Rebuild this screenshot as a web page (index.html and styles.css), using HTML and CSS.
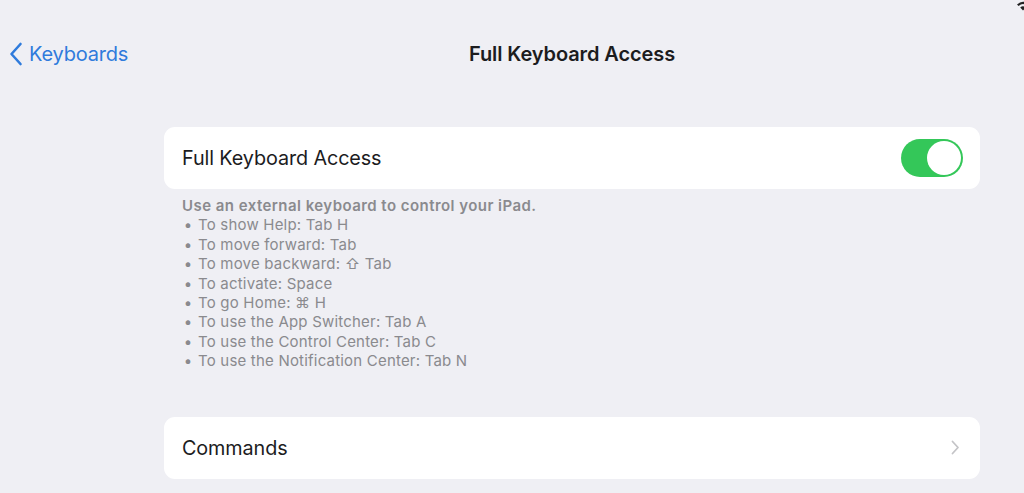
FILE: index.html
```html
<!doctype html>
<html lang="en">
    <head>
        <meta charset="UTF-8" />
        <meta name="viewport" content="width=device-width, initial-scale=1.0" />
        <title>Full Keyboard Access</title>
        <link rel="stylesheet" href="styles.css">
    </head>
    <body>
        <svg class="status-wifi" width="14" height="12" viewBox="0 0 14 12">
            <path d="M1 4.5 Q7 -1 13 4.5 L11.4 6.1 Q7 2 2.6 6.1 Z M4.2 7.6 Q7 5 9.8 7.6 L7 10.5 Z" fill="#222" />
        </svg>

        <header class="nav-bar">
            <a class="back-link" href="#">
                <svg width="14" height="24" viewBox="0 0 14 24">
                    <path d="M11.5 2 L2.5 12 L11.5 22" fill="none" stroke="currentColor" stroke-width="2.6" stroke-linecap="round" stroke-linejoin="round" />
                </svg>
                <span>Keyboards</span>
            </a>
            <h1 class="nav-title">Full Keyboard Access</h1>
        </header>

        <main class="content">
            <div class="group">
                <div class="row">
                    <span class="row-label">Full Keyboard Access</span>
                    <span class="switch is-on"><span class="switch-knob"></span></span>
                </div>
            </div>

            <div class="footer-note">
                <p class="footer-lead">Use an external keyboard to control your iPad.</p>
                <ul class="shortcut-list">
                    <li>To show Help: Tab H</li>
                    <li>To move forward: Tab</li>
                    <li>To move backward: ⇧ Tab</li>
                    <li>To activate: Space</li>
                    <li>To go Home: ⌘ H</li>
                    <li>To use the App Switcher: Tab A</li>
                    <li>To use the Control Center: Tab C</li>
                    <li>To use the Notification Center: Tab N</li>
                </ul>
            </div>

            <div class="group group-commands">
                <a class="row row-link" href="#">
                    <span class="row-label">Commands</span>
                    <svg class="chevron" width="9" height="15" viewBox="0 0 9 15">
                        <path d="M1.5 1.5 L7 7.5 L1.5 13.5" fill="none" stroke="#c4c4c7" stroke-width="1.8" stroke-linecap="round" stroke-linejoin="round" />
                    </svg>
                </a>
            </div>
        </main>
    </body>
</html>
```

FILE: styles.css
```css
body {
    font-family: Inter, 'Noto Sans', sans-serif;
    margin: 0;
    height: 493px;
    overflow: hidden;
    background: #efeff4;
    color: #1c1c1e;
    position: relative;
}

a {
    text-decoration: none;
    color: inherit;
}

.status-wifi {
    position: absolute;
    top: 0;
    right: -6px;
}

.nav-bar {
    display: grid;
    grid-template-columns: 164px 816px;
    align-items: center;
    height: 108px;
}

.back-link {
    display: flex;
    align-items: center;
    gap: 6px;
    padding-left: 9px;
    color: #2f7bdc;
    font-size: 20px;
    letter-spacing: -0.2px;
}

.nav-title {
    margin: 0;
    text-align: center;
    font-size: 20px;
    font-weight: 600;
    letter-spacing: -0.1px;
}

.content {
    margin-left: 164px;
    width: 816px;
    margin-top: 19px;
}

.group {
    background: #fff;
    border-radius: 11px;
}

.row {
    display: flex;
    align-items: center;
    justify-content: space-between;
    height: 62px;
    padding: 0 17px 0 18px;
}

.row-label {
    font-size: 19.8px;
    letter-spacing: -0.1px;
}

.switch {
    display: flex;
    width: 62px;
    height: 38px;
    border-radius: 19px;
    background: #34c759;
    padding: 2px;
    box-sizing: border-box;
    justify-content: flex-end;
}

.switch-knob {
    width: 34px;
    height: 34px;
    border-radius: 50%;
    background: #fff;
}

.footer-note {
    padding: 7px 18px 0;
    color: #8a8a8e;
    font-size: 15px;
    line-height: 19.4px;
    letter-spacing: 0.2px;
}

.footer-lead {
    margin: 0;
    font-weight: 600;
    letter-spacing: 0.45px;
}

.shortcut-list {
    list-style: none;
    margin: 0;
    padding: 0;
}

.shortcut-list li::before {
    content: "•";
    display: inline-block;
    width: 12px;
    margin-right: 4px;
    text-align: center;
}

.group-commands {
    margin-top: 46px;
}

.chevron {
    margin-right: 3px;
}
```
